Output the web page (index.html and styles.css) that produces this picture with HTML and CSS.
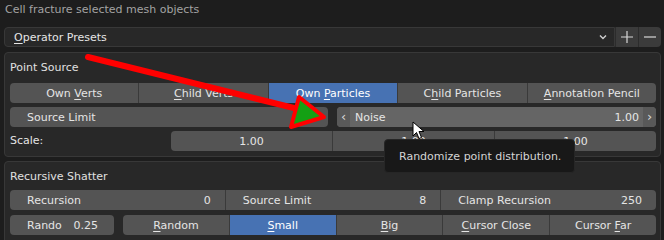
FILE: index.html
```html
<!DOCTYPE html>
<html lang="en">
<head>
    <meta charset="UTF-8">
    <title>Cell Fracture</title>
    <link rel="stylesheet" href="styles.css">
</head>
<body>
    <div class="op-title">Cell fracture selected mesh objects</div>
    <div class="presets">
        <div class="preset-menu">
            <span><u>O</u>perator Presets</span>
            <svg class="chevron" width="10" height="8" viewBox="0 0 10 8"><path d="M2 2.5 L5 5.5 L8 2.5" fill="none" stroke="#cfcfcf" stroke-width="1.4"/></svg>
        </div>
        <div class="preset-btn">
            <svg width="14" height="14" viewBox="0 0 14 14"><path d="M7 1 V13 M1 7 H13" stroke="#d8d8d8" stroke-width="1.2"/></svg>
        </div>
        <div class="preset-btn">
            <svg width="14" height="14" viewBox="0 0 14 14"><path d="M1 7 H13" stroke="#d8d8d8" stroke-width="1.2"/></svg>
        </div>
    </div>

    <section class="panel">
        <div class="panel-head">Point Source</div>
        <div class="row seg">
            <div class="btn"><span>Own <u>V</u>erts</span></div>
            <div class="btn"><span><u>C</u>hild Verts</span></div>
            <div class="btn active"><span>Own <u>P</u>articles</span></div>
            <div class="btn"><span>C<u>h</u>ild Particles</span></div>
            <div class="btn"><span><u>A</u>nnotation Pencil</span></div>
        </div>
        <div class="row halves">
            <div class="btn field">Source Limit</div>
            <div class="slider">
                <span class="arr">&lsaquo;</span>
                <span class="s-label">Noise</span>
                <span class="s-val">1.00</span>
                <span class="arr">&rsaquo;</span>
            </div>
        </div>
        <div class="row scale">
            <div class="label">Scale:</div>
            <div class="seg">
                <div class="btn">1.00</div>
                <div class="btn">1.00</div>
                <div class="btn">1.00</div>
            </div>
        </div>
    </section>

    <section class="panel second">
        <div class="panel-head">Recursive Shatter</div>
        <div class="row seg">
            <div class="btn num"><span>Recursion</span><span>0</span></div>
            <div class="btn num"><span>Source Limit</span><span>8</span></div>
            <div class="btn num"><span>Clamp Recursion</span><span>250</span></div>
        </div>
        <div class="row rando">
            <div class="btn num short"><span>Rando</span><span>0.25</span></div>
            <div class="seg">
                <div class="btn"><span><u>R</u>andom</span></div>
                <div class="btn active"><span><u>S</u>mall</span></div>
                <div class="btn"><span><u>B</u>ig</span></div>
                <div class="btn"><span><u>C</u>ursor Close</span></div>
                <div class="btn"><span>Cursor <u>F</u>ar</span></div>
            </div>
        </div>
    </section>

    <div class="tooltip">Randomize point distribution.</div>

    <!-- annotation drawn over the screenshot -->
    <svg class="annot" width="664" height="240" viewBox="0 0 664 240">
        <line x1="88" y1="57" x2="302" y2="110" stroke="#ff0000" stroke-width="6" stroke-linecap="round"/>
        <polygon points="299,97 324,117 291,127" fill="#14a014" stroke="#ff0000" stroke-width="4" stroke-linejoin="round"/>
    </svg>
    <svg class="cursor" width="14" height="20" viewBox="0 0 14 20">
        <path d="M1 1 L1 15 L4.5 11.5 L7 17.5 L9.5 16.5 L7 10.5 L12 10.5 Z" fill="#fff" stroke="#000" stroke-width="1"/>
    </svg>
</body>
</html>
```

FILE: styles.css
```css
body {
    margin: 0;
    width: 664px;
    height: 240px;
    overflow: hidden;
    background-color: #1d1d1d;
    font-family: "DejaVu Sans", sans-serif;
    font-size: 11px;
    color: #e5e5e5;
    position: relative;
}
u {
    text-decoration: underline;
    text-underline-offset: 2px;
}
.op-title {
    height: 20px;
    line-height: 20px;
    padding-left: 5px;
    color: #a3a3a3;
}
.presets {
    display: flex;
    height: 20px;
    margin: 7px 3px 0 4px;
}
.preset-menu {
    flex: 1;
    display: flex;
    align-items: center;
    justify-content: space-between;
    padding: 0 6px 0 9px;
    background-color: #282828;
    border: 1px solid #383838;
    border-radius: 4px 0 0 4px;
}
.preset-btn {
    width: 22px;
    display: flex;
    align-items: center;
    justify-content: center;
    background-color: #3b3b3b;
    border-left: 1px solid #2c2c2c;
}
.preset-btn:last-child {
    border-radius: 0 4px 4px 0;
}
.panel {
    margin: 5px 3px 0 4px;
    padding: 0 4px 5px 5px;
    background-color: #282828;
    border: 1px solid #383838;
    border-radius: 4px;
}
.panel.second {
    margin-top: 4px;
}
.panel-head {
    height: 30px;
    line-height: 30px;
    color: #e0e0e0;
}
.second .panel-head {
    height: 28px;
    line-height: 29px;
}
.row {
    height: 20px;
    margin-bottom: 4px;
}
.row:last-child {
    margin-bottom: 0;
}
.second .row {
    margin-bottom: 5px;
}
.seg {
    display: flex;
    border-radius: 4px;
    overflow: hidden;
}
.seg .btn {
    flex: 1;
    border-radius: 0;
    border-left: 1px solid #3a3a3a;
}
.seg .btn:first-child {
    border-left: none;
}
.btn {
    display: flex;
    align-items: center;
    justify-content: center;
    height: 20px;
    background-color: #545454;
    border-radius: 4px;
    color: #e5e5e5;
    white-space: nowrap;
}
.btn.active {
    background-color: #4772b3;
    color: #fff;
}
.btn.field {
    justify-content: flex-start;
    padding-left: 17px;
}
.btn.num {
    justify-content: space-between;
    padding: 0 14px 0 17px;
}
.halves {
    display: grid;
    grid-template-columns: 318px 1fr;
    gap: 9px;
}
.slider {
    display: flex;
    align-items: center;
    background-color: #656565;
    border-radius: 4px;
    overflow: hidden;
}
.slider .arr {
    width: 13px;
    height: 20px;
    line-height: 19px;
    text-align: center;
    background-color: #595959;
    font-size: 13px;
    color: #d8d8d8;
}
.slider .s-label {
    flex: 1;
    padding-left: 5px;
}
.slider .s-val {
    padding-right: 4px;
}
.scale {
    display: grid;
    grid-template-columns: 161px 1fr;
}
.scale .label {
    line-height: 20px;
}
.rando {
    display: grid;
    grid-template-columns: 104px 1fr;
    gap: 9px;
}
.btn.short {
    padding: 0 16px 0 17px;
}
.tooltip {
    position: absolute;
    left: 384px;
    top: 139px;
    width: 191px;
    height: 34px;
    padding-left: 14px;
    line-height: 33px;
    background-color: #181818;
    border: 1px solid #262626;
    border-radius: 4px;
    color: #d4d4d4;
    box-sizing: border-box;
}
.annot {
    position: absolute;
    left: 0;
    top: 0;
    pointer-events: none;
}
.cursor {
    position: absolute;
    left: 412px;
    top: 121px;
}
```
